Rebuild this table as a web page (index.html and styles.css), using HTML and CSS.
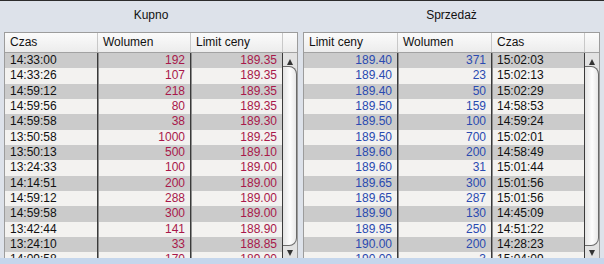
FILE: index.html
```html
<!DOCTYPE html>
<html>
<head>
<meta charset="utf-8">
<link rel="stylesheet" href="styles.css">
</head>
<body>
<div class="app">
  <div class="panels">
    <section class="panel panel-buy">
      <div class="title">Kupno</div>
      <div class="table">
        <div class="head">
          <div class="hc">Czas</div><div class="hc">Wolumen</div><div class="hc">Limit ceny</div><div class="hc hs"></div>
        </div>
        <div class="body">
          <div class="rows buy">
            <div class="row"><span class="t">14:33:00</span><span class="n">192</span><span class="n">189.35</span></div>
            <div class="row"><span class="t">14:33:26</span><span class="n">107</span><span class="n">189.35</span></div>
            <div class="row"><span class="t">14:59:12</span><span class="n">218</span><span class="n">189.35</span></div>
            <div class="row"><span class="t">14:59:56</span><span class="n">80</span><span class="n">189.35</span></div>
            <div class="row"><span class="t">14:59:58</span><span class="n">38</span><span class="n">189.30</span></div>
            <div class="row"><span class="t">13:50:58</span><span class="n">1000</span><span class="n">189.25</span></div>
            <div class="row"><span class="t">13:50:13</span><span class="n">500</span><span class="n">189.10</span></div>
            <div class="row"><span class="t">13:24:33</span><span class="n">100</span><span class="n">189.00</span></div>
            <div class="row"><span class="t">14:14:51</span><span class="n">200</span><span class="n">189.00</span></div>
            <div class="row"><span class="t">14:59:12</span><span class="n">288</span><span class="n">189.00</span></div>
            <div class="row"><span class="t">14:59:58</span><span class="n">300</span><span class="n">189.00</span></div>
            <div class="row"><span class="t">13:42:44</span><span class="n">141</span><span class="n">188.90</span></div>
            <div class="row"><span class="t">13:24:10</span><span class="n">33</span><span class="n">188.85</span></div>
            <div class="row"><span class="t">14:09:58</span><span class="n">170</span><span class="n">189.00</span></div>
          </div>
          <div class="scroll">
            <div class="arrow up"></div>
            <div class="thumb"></div>
            <div class="arrow down"></div>
          </div>
        </div>
      </div>
    </section>
    <section class="panel panel-sell">
      <div class="title">Sprzedaż</div>
      <div class="table">
        <div class="head">
          <div class="hc">Limit ceny</div><div class="hc">Wolumen</div><div class="hc">Czas</div><div class="hc hs"></div>
        </div>
        <div class="body">
          <div class="rows sell">
            <div class="row"><span class="n">189.40</span><span class="n">371</span><span class="t">15:02:03</span></div>
            <div class="row"><span class="n">189.40</span><span class="n">23</span><span class="t">15:02:13</span></div>
            <div class="row"><span class="n">189.40</span><span class="n">50</span><span class="t">15:02:29</span></div>
            <div class="row"><span class="n">189.50</span><span class="n">159</span><span class="t">14:58:53</span></div>
            <div class="row"><span class="n">189.50</span><span class="n">100</span><span class="t">14:59:24</span></div>
            <div class="row"><span class="n">189.50</span><span class="n">700</span><span class="t">15:02:01</span></div>
            <div class="row"><span class="n">189.60</span><span class="n">200</span><span class="t">14:58:49</span></div>
            <div class="row"><span class="n">189.60</span><span class="n">31</span><span class="t">15:01:44</span></div>
            <div class="row"><span class="n">189.65</span><span class="n">300</span><span class="t">15:01:56</span></div>
            <div class="row"><span class="n">189.65</span><span class="n">287</span><span class="t">15:01:56</span></div>
            <div class="row"><span class="n">189.90</span><span class="n">130</span><span class="t">14:45:09</span></div>
            <div class="row"><span class="n">189.95</span><span class="n">250</span><span class="t">14:51:22</span></div>
            <div class="row"><span class="n">190.00</span><span class="n">200</span><span class="t">14:28:23</span></div>
            <div class="row"><span class="n">190.00</span><span class="n">3</span><span class="t">15:04:09</span></div>
          </div>
          <div class="scroll">
            <div class="arrow up"></div>
            <div class="thumb"></div>
            <div class="arrow down"></div>
          </div>
        </div>
      </div>
    </section>
  </div>
  <div class="footer"></div>
</div>
</body>
</html>
```
FILE: styles.css
```css
html, body {
  margin: 0;
  padding: 0;
}
body {
  font-family: "Liberation Sans", Arial, sans-serif;
  font-size: 12px;
  color: #111;
}
.app {
  width: 604px;
  height: 264px;
  box-sizing: border-box;
  border-top: 1px solid #2c2c2c;
  background: #dde2ea;
  display: flex;
  flex-direction: column;
}
.panels {
  display: flex;
  gap: 5px;
  padding: 0 4px;
  height: 257px;
}
.panel {
  display: flex;
  flex-direction: column;
}
.panel-buy { width: 294px; }
.panel-sell { width: 297px; }
.title {
  height: 31px;
  line-height: 28px;
  text-align: center;
  color: #111;
}
.table {
  height: 226px;
  box-sizing: border-box;
  border: 1px solid #9c9c9c;
  border-bottom: none;
  background: #f3f2f0;
  display: flex;
  flex-direction: column;
  overflow: hidden;
}
.head {
  display: grid;
  height: 20px;
  box-sizing: border-box;
  border-bottom: 1px solid #a2a2a2;
  background: linear-gradient(#fbfbfb, #ececec);
}
.panel-buy .head, .panel-buy .row { grid-template-columns: 93px 93px 92px; }
.panel-buy .head { grid-template-columns: 93px 93px 92px 14px; }
.panel-sell .head, .panel-sell .row { grid-template-columns: 94px 94px 93px; }
.panel-sell .head { grid-template-columns: 94px 94px 93px 14px; }
.hc {
  box-sizing: border-box;
  border-right: 1px solid #c8c8c8;
  padding-left: 5px;
  line-height: 19px;
  white-space: nowrap;
  overflow: hidden;
}
.hs { border-right: none; }
.body {
  flex: 1;
  display: flex;
  min-height: 0;
}
.rows {
  flex: 1;
  display: flex;
  flex-direction: column;
}
.row {
  display: grid;
  height: 15.33px;
  flex: none;
  line-height: 15px;
  background: #f3f2f0;
}
.row:nth-child(odd) {
  background: #cbcbcb;
}
.row span {
  box-sizing: border-box;
  border-right: 1px solid #3a3a3a;
  box-shadow: 1px 0 0 #8e8e8e;
  white-space: nowrap;
  overflow: hidden;
}
.t {
  padding-left: 5px;
  color: #111;
}
.n {
  text-align: right;
  padding-right: 5px;
}
.buy .n { color: #a8184a; }
.sell .n { color: #2a4ab0; }
.scroll {
  width: 14px;
  flex: none;
  background: #e2e2e2;
  display: flex;
  flex-direction: column;
  align-items: stretch;
}
.arrow {
  height: 13px;
  flex: none;
  display: flex;
  align-items: center;
  justify-content: center;
}
.arrow::after {
  content: "";
  width: 0;
  height: 0;
  border-left: 3px solid transparent;
  border-right: 3px solid transparent;
}
.up::after { border-bottom: 6px solid #333; margin-top: 4px; }
.down { height: 12px; }
.down::after { border-top: 6px solid #333; margin-top: 2px; }
.thumb {
  flex: 1;
  box-sizing: border-box;
  border: 1px solid #6a6a6a;
  border-left: none;
  border-radius: 0 8px 8px 0;
  background: linear-gradient(to right, #e4e4e4, #fdfdfd 55%, #e8e8e8);
}
.footer {
  flex: 1;
  background: #c5d6ec;
}
```
